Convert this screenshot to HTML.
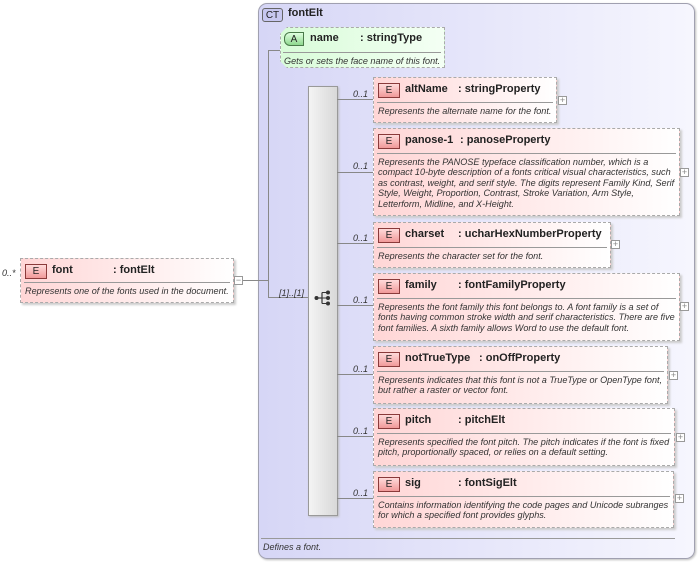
<!DOCTYPE html>
<html><head><meta charset="utf-8"><style>
*{margin:0;padding:0;box-sizing:border-box}
body{width:698px;height:562px;background:#fff;position:relative;overflow:hidden;font-family:"Liberation Sans",Arial,sans-serif;color:#222}
.abs{position:absolute}
.ct{left:258px;top:3px;width:437px;height:556px;border:1px solid #a0a0b0;border-radius:9px;background:linear-gradient(90deg,#d6d6f6 0%,#e6e6fa 50%,#f6f6fe 100%);box-shadow:1px 1px 2px #bbb}
.badge{position:absolute;font-size:10px;text-align:center;border:1px solid #777;line-height:13px}
.el{position:absolute;border:1px dashed #aaa;background:linear-gradient(90deg,#ffd6d6 0%,#ffe8e8 45%,#fff 100%);box-shadow:2px 2px 2px #ccc}
.el .eb{position:absolute;left:4px;top:5px;width:22px;height:15px;border:1px solid #8a3a3a;background:linear-gradient(#ffdada,#f19a9a);font-size:10px;text-align:center;line-height:13px;color:#222}
.el .n{position:absolute;left:31px;top:5px;font-size:11px;font-weight:bold;white-space:pre}
.el .t{position:absolute;top:5px;font-size:11px;font-weight:bold;white-space:pre}
.el .sep{position:absolute;left:3px;right:3px;top:24px;border-top:1px solid #999}
.el .d{position:absolute;left:4px;top:28px;font-size:9.1px;font-style:italic;line-height:10.4px;color:#333;white-space:nowrap}
.pl{position:absolute;width:9px;height:9px;border:1px solid #999;background:#fff;font-size:9px;line-height:7px;text-align:center;color:#888}
.m{position:absolute;font-size:9px;font-style:italic;color:#333}
.hl{position:absolute;height:1px;background:#888}
.vl{position:absolute;width:1px;background:#888}
</style></head><body>
<div class="abs ct"></div>
<div class="badge" style="left:262px;top:8px;width:21px;height:14px;border-radius:3px;background:#c8c8f0;border-color:#666">CT</div>
<div class="abs" style="left:288px;top:7px;font-size:11px;font-weight:bold">fontElt</div>
<div class="abs" style="left:261px;top:538px;width:414px;border-top:1px solid #999"></div>
<div class="abs" style="left:263px;top:542px;font-size:9px;font-style:italic;color:#333">Defines a font.</div>

<div class="abs" style="left:280px;top:27px;width:165px;height:41px;border:1px dashed #aaa;background:linear-gradient(90deg,#d8fcd8,#f4fff4);box-shadow:2px 2px 2px #ccc;clip-path:polygon(7px 0,100% 0,100% 100%,7px 100%,0 calc(100% - 7px),0 7px)"></div>
<div class="badge" style="left:284px;top:32px;width:20px;height:14px;background:linear-gradient(#e0ffe0,#8ed88e);border-color:#4a7a4a;border-radius:6px 0 0 6px">A</div>
<div class="abs" style="left:310px;top:32px;font-size:11px;font-weight:bold">name</div>
<div class="abs" style="left:360px;top:32px;font-size:11px;font-weight:bold">: stringType</div>
<div class="abs" style="left:283px;top:52px;width:158px;border-top:1px solid #999"></div>
<div class="abs" style="left:284px;top:56px;font-size:9.1px;font-style:italic;color:#333">Gets or sets the face name of this font.</div>

<div class="vl" style="left:268px;top:50px;height:248px"></div>
<div class="hl" style="left:268px;top:50px;width:12px"></div>
<div class="hl" style="left:242px;top:280px;width:26px"></div>
<div class="hl" style="left:268px;top:297px;width:40px"></div>
<div class="m" style="left:279px;top:288px">[1]..[1]</div>

<div class="m" style="left:2px;top:268px">0..*</div>
<div class="el" style="left:20px;top:258px;width:214px;height:45px">
<div class="eb">E</div><div class="n">font</div><div class="t" style="left:92px">: fontElt</div>
<div class="sep" style="top:23px"></div>
<div class="d" style="top:27px">Represents one of the fonts used in the document.</div></div>
<div class="pl" style="left:234px;top:276px">−</div>

<div class="abs" style="left:308px;top:86px;width:30px;height:430px;border:1px solid #999;background:linear-gradient(90deg,#f4f4f4,#d8d8d8);box-shadow:1px 1px 2px #bbb"></div>
<svg class="abs" style="left:314px;top:290px" width="20" height="16" viewBox="0 0 20 16">
<line x1="2" y1="8" x2="8" y2="8" stroke="#333" stroke-width="1.2"/>
<line x1="8" y1="2.5" x2="8" y2="13.5" stroke="#333" stroke-width="1.2"/>
<line x1="8" y1="2.5" x2="13" y2="2.5" stroke="#333"/><line x1="8" y1="8" x2="13" y2="8" stroke="#333"/><line x1="8" y1="13.5" x2="13" y2="13.5" stroke="#333"/>
<circle cx="2.5" cy="8" r="2" fill="#333"/><circle cx="14" cy="2.5" r="2" fill="#333"/><circle cx="14" cy="8" r="2" fill="#333"/><circle cx="14" cy="13.5" r="2" fill="#333"/>
</svg>

<div class="hl" style="left:337px;top:99px;width:36px"></div><div class="m" style="left:353px;top:89px">0..1</div>
<div class="el" style="left:373px;top:77px;width:184px;height:46px"><div class="eb">E</div><div class="n">altName</div><div class="t" style="left:84px">: stringProperty</div><div class="sep"></div><div class="d">Represents the alternate name for the font.</div></div>
<div class="pl" style="left:558px;top:96px">+</div>

<div class="hl" style="left:337px;top:172px;width:36px"></div><div class="m" style="left:353px;top:161px">0..1</div>
<div class="el" style="left:373px;top:128px;width:307px;height:88px"><div class="eb">E</div><div class="n">panose-1</div><div class="t" style="left:86px">: panoseProperty</div><div class="sep"></div><div class="d">Represents the PANOSE typeface classification number, which is a<br>compact 10-byte description of a fonts critical visual characteristics, such<br>as contrast, weight, and serif style. The digits represent Family Kind, Serif<br>Style, Weight, Proportion, Contrast, Stroke Variation, Arm Style,<br>Letterform, Midline, and X-Height.</div></div>
<div class="pl" style="left:680px;top:168px">+</div>

<div class="hl" style="left:337px;top:243px;width:36px"></div><div class="m" style="left:353px;top:233px">0..1</div>
<div class="el" style="left:373px;top:222px;width:238px;height:46px"><div class="eb">E</div><div class="n">charset</div><div class="t" style="left:84px">: ucharHexNumberProperty</div><div class="sep"></div><div class="d">Represents the character set for the font.</div></div>
<div class="pl" style="left:611px;top:240px">+</div>

<div class="hl" style="left:337px;top:305px;width:36px"></div><div class="m" style="left:353px;top:295px">0..1</div>
<div class="el" style="left:373px;top:273px;width:307px;height:68px"><div class="eb">E</div><div class="n">family</div><div class="t" style="left:84px">: fontFamilyProperty</div><div class="sep"></div><div class="d">Represents the font family this font belongs to. A font family is a set of<br>fonts having common stroke width and serif characteristics. There are five<br>font families. A sixth family allows Word to use the default font.</div></div>
<div class="pl" style="left:680px;top:302px">+</div>

<div class="hl" style="left:337px;top:374px;width:36px"></div><div class="m" style="left:353px;top:364px">0..1</div>
<div class="el" style="left:373px;top:346px;width:295px;height:58px"><div class="eb">E</div><div class="n">notTrueType</div><div class="t" style="left:105px">: onOffProperty</div><div class="sep"></div><div class="d">Represents indicates that this font is not a TrueType or OpenType font,<br>but rather a raster or vector font.</div></div>
<div class="pl" style="left:669px;top:371px">+</div>

<div class="hl" style="left:337px;top:436px;width:36px"></div><div class="m" style="left:353px;top:426px">0..1</div>
<div class="el" style="left:373px;top:408px;width:302px;height:58px"><div class="eb">E</div><div class="n">pitch</div><div class="t" style="left:84px">: pitchElt</div><div class="sep"></div><div class="d">Represents specified the font pitch. The pitch indicates if the font is fixed<br>pitch, proportionally spaced, or relies on a default setting.</div></div>
<div class="pl" style="left:676px;top:433px">+</div>

<div class="hl" style="left:337px;top:498px;width:36px"></div><div class="m" style="left:353px;top:488px">0..1</div>
<div class="el" style="left:373px;top:471px;width:301px;height:57px"><div class="eb">E</div><div class="n">sig</div><div class="t" style="left:84px">: fontSigElt</div><div class="sep"></div><div class="d">Contains information identifying the code pages and Unicode subranges<br>for which a specified font provides glyphs.</div></div>
<div class="pl" style="left:675px;top:494px">+</div>
</body></html>
